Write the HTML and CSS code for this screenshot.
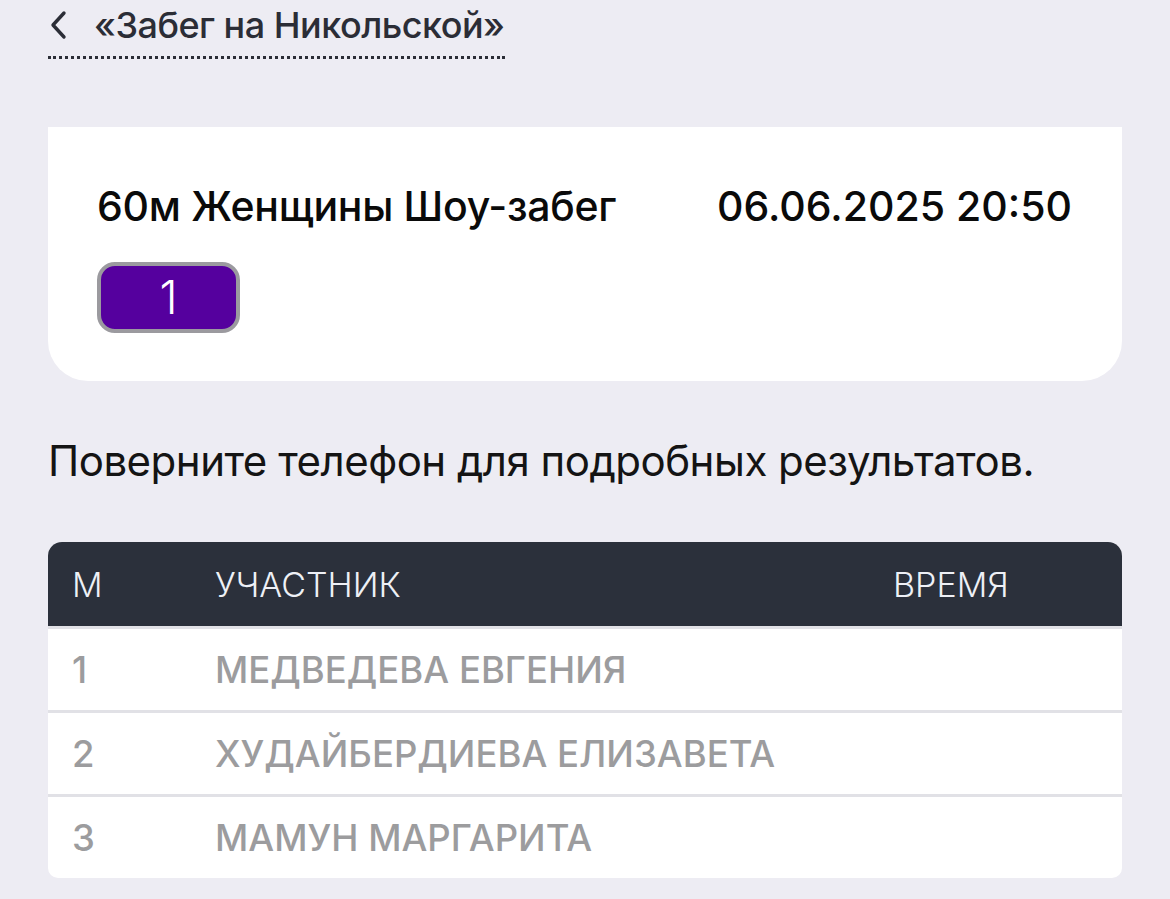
FILE: index.html
```html
<!DOCTYPE html>
<html lang="ru">
<head>
    <meta charset="utf-8">
    <title>Забег на Никольской</title>
    <link rel="stylesheet" href="styles.css">
</head>
<body>
    <div class="page">
        <a class="back" href="#">
            <svg class="back-icon" width="22" height="30" viewBox="0 0 22 30">
                <path d="M16 3 L5 15 L16 27" fill="none" stroke="#2b2d36" stroke-width="3.4" stroke-linecap="round" stroke-linejoin="round"/>
            </svg>
            <span class="back-title">«Забег на Никольской»</span>
        </a>

        <div class="race-card">
            <div class="race-head">
                <span class="race-name">60м Женщины Шоу-забег</span>
                <span class="race-date">06.06.2025 20:50</span>
            </div>
            <div class="heat">1</div>
        </div>

        <p class="hint">Поверните телефон для подробных результатов.</p>

        <div class="results">
            <div class="row head">
                <span class="col-place">М</span>
                <span class="col-name">УЧАСТНИК</span>
                <span class="col-time">ВРЕМЯ</span>
            </div>
            <div class="row">
                <span class="col-place">1</span>
                <span class="col-name">МЕДВЕДЕВА ЕВГЕНИЯ</span>
                <span class="col-time"></span>
            </div>
            <div class="row">
                <span class="col-place">2</span>
                <span class="col-name">ХУДАЙБЕРДИЕВА ЕЛИЗАВЕТА</span>
                <span class="col-time"></span>
            </div>
            <div class="row">
                <span class="col-place">3</span>
                <span class="col-name">МАМУН МАРГАРИТА</span>
                <span class="col-time"></span>
            </div>
        </div>
    </div>
</body>
</html>
```

FILE: styles.css
```css
body {
    margin: 0;
    background: #edecf3;
    font-family: "Inter", "Noto Sans", sans-serif;
    color: #111;
}

.page {
    padding: 0 48px;
}

.back {
    display: inline-flex;
    align-items: center;
    gap: 24px;
    padding: 6px 0 12px;
    border-bottom: 3px dotted #2b2d36;
    text-decoration: none;
    color: #2b2d36;
}

.back-icon {
    display: block;
}

.back-title {
    font-size: 36px;
    font-weight: 500;
    letter-spacing: -0.5px;
    line-height: 38px;
}

.race-card {
    margin-top: 68px;
    background: #fff;
    border-radius: 0 0 40px 40px;
    padding: 58px 50px 48px 49px;
}

.race-head {
    display: flex;
    justify-content: space-between;
    align-items: baseline;
}

.race-name,
.race-date {
    font-size: 41px;
    font-weight: 500;
    line-height: 42px;
    color: #0a0a0a;
}

.race-name {
    letter-spacing: -0.3px;
}

.race-date {
    letter-spacing: 0;
}

.heat {
    margin-top: 35px;
    width: 135px;
    height: 63px;
    box-sizing: content-box;
    border: 4px solid #9b9a9f;
    border-radius: 18px;
    background: #55009e;
    color: #fff;
    font-size: 46px;
    font-weight: 300;
    line-height: 63px;
    text-align: center;
}

.hint {
    margin: 56px 0 0;
    font-size: 42px;
    font-weight: 400;
    letter-spacing: -0.5px;
    line-height: 48px;
    color: #141414;
}

.results {
    margin-top: 57px;
    border-radius: 14px 14px 10px 10px;
    overflow: hidden;
    background: #fff;
}

.row {
    display: flex;
    align-items: center;
    box-sizing: border-box;
    height: 84px;
    padding: 0 24px;
    font-size: 36.5px;
    font-weight: 500;
    color: #9c9c9e;
    border-top: 3px solid #e1e1e6;
}

.row.head {
    border-top: none;
    background: #2b303b;
    color: #eef0f6;
    font-weight: 300;
    font-size: 34px;
}

.col-place {
    width: 143px;
}

.col-name {
    flex: 1;
}

.col-time {
    width: 205px;
}
```
